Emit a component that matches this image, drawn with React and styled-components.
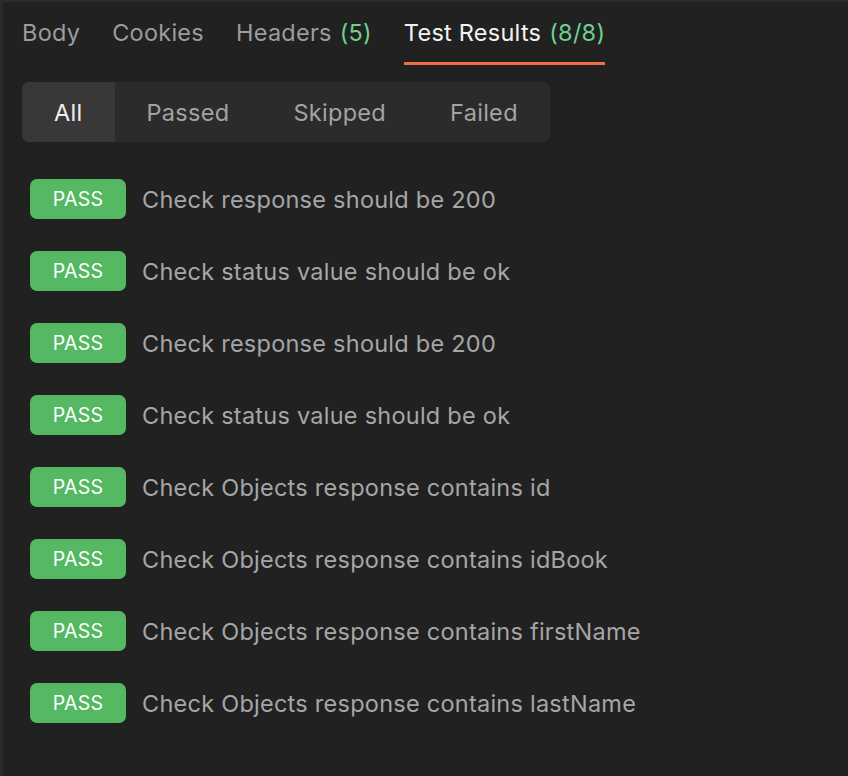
import React from "react";
import styled, { createGlobalStyle } from "styled-components";

const Global = createGlobalStyle`
  html, body { margin: 0; padding: 0; background: #212121; }
  body { font-family: Inter, "Noto Sans", sans-serif; -webkit-font-smoothing: antialiased; }
`;

const Panel = styled.div`
  min-height: 100vh;
  box-sizing: border-box;
  background: #212121;
  border-top: 2px solid #2c2c2c;
  border-left: 3px solid #2a2a2a;
  padding: 0 0 0 19px;
`;

const TabBar = styled.nav`
  display: flex;
  gap: 32px;
  padding-top: 14px;
`;

const Tab = styled.div`
  font-size: 23.5px;
  line-height: 34px;
  letter-spacing: 0.25px;
  padding-bottom: 12px;
  color: ${(p) => (p.$active ? "#f2f2f2" : "#9c9c9c")};
  border-bottom: 3px solid ${(p) => (p.$active ? "#ef7040" : "transparent")};
`;

const Count = styled.span`
  color: #6fcf8e;
  margin-left: 8px;
`;

const Segmented = styled.div`
  display: inline-flex;
  margin-top: 17px;
  height: 60px;
  background: #2b2b2b;
  border-radius: 7px;
  overflow: hidden;
`;

const Segment = styled.div`
  display: flex;
  align-items: center;
  padding: 0 32px;
  font-size: 23.5px;
  letter-spacing: 0.3px;
  color: ${(p) => (p.$active ? "#f0f0f0" : "#a3a3a3")};
  background: ${(p) => (p.$active ? "#383838" : "transparent")};
`;

const List = styled.div`
  display: flex;
  flex-direction: column;
  gap: 32px;
  margin-top: 37px;
  padding-left: 8px;
`;

const Row = styled.div`
  display: flex;
  align-items: center;
  gap: 16px;
  height: 40px;
`;

const Badge = styled.span`
  display: flex;
  align-items: center;
  justify-content: center;
  width: 96px;
  height: 40px;
  border-radius: 7px;
  background: ${(p) => (p.$status === "PASS" ? "#55b862" : "#d9534f")};
  color: #ffffff;
  font-size: 19.5px;
  letter-spacing: 0.2px;
`;

const Name = styled.span`
  font-size: 23.5px;
  letter-spacing: 0.25px;
  color: #a6a6a6;
`;

const tests = [
  "Check response should be 200",
  "Check status value should be ok",
  "Check response should be 200",
  "Check status value should be ok",
  "Check Objects response contains id",
  "Check Objects response contains idBook",
  "Check Objects response contains firstName",
  "Check Objects response contains lastName",
];

export default function App() {
  return (
    <>
      <Global />
      <Panel>
        <TabBar>
          <Tab>Body</Tab>
          <Tab>Cookies</Tab>
          <Tab>
            Headers<Count>(5)</Count>
          </Tab>
          <Tab $active>
            Test Results<Count>(8/8)</Count>
          </Tab>
        </TabBar>
        <Segmented>
          <Segment $active>All</Segment>
          <Segment>Passed</Segment>
          <Segment>Skipped</Segment>
          <Segment>Failed</Segment>
        </Segmented>
        <List>
          {tests.map((t, i) => (
            <Row key={i}>
              <Badge $status="PASS">PASS</Badge>
              <Name>{t}</Name>
            </Row>
          ))}
        </List>
      </Panel>
    </>
  );
}
